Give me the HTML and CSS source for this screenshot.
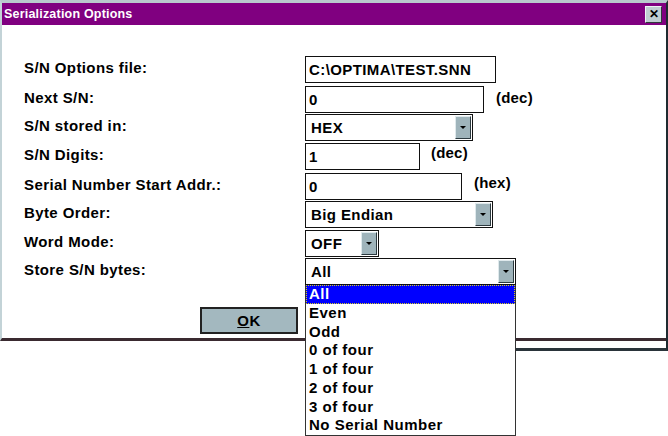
FILE: index.html
```html
<!DOCTYPE html>
<html lang="en">
<head>
  <meta charset="UTF-8" />
  <title>Serialization Options</title>
  <link rel="stylesheet" href="styles.css">
</head>
<body>
  <div class="window">
    <div class="titlebar">
      <span class="title">Serialization Options</span>
      <span class="close">&#x2715;</span>
    </div>

    <div class="dialog">
      <div class="row r1">
        <span class="label">S/N Options file:</span>
        <span class="field text w190">C:\OPTIMA\TEST.SNN</span>
      </div>
      <div class="row r2">
        <span class="label">Next S/N:</span>
        <span class="field text w178">0</span>
        <span class="unit u-next">(dec)</span>
      </div>
      <div class="row r3">
        <span class="label">S/N stored in:</span>
        <span class="field select w167">HEX<i class="arrow"></i></span>
      </div>
      <div class="row r4">
        <span class="label">S/N Digits:</span>
        <span class="field text w114">1</span>
        <span class="unit u-digits">(dec)</span>
      </div>
      <div class="row r5">
        <span class="label">Serial Number Start Addr.:</span>
        <span class="field text w156">0</span>
        <span class="unit u-addr">(hex)</span>
      </div>
      <div class="row r6">
        <span class="label">Byte Order:</span>
        <span class="field select w187">Big Endian<i class="arrow"></i></span>
      </div>
      <div class="row r7">
        <span class="label">Word Mode:</span>
        <span class="field select w73">OFF<i class="arrow"></i></span>
      </div>
      <div class="row r8">
        <span class="label">Store S/N bytes:</span>
        <span class="field select w210 open">All<i class="arrow"></i>
          <ul class="listbox">
            <li class="selected"><span>All</span></li>
            <li>Even</li>
            <li>Odd</li>
            <li>0 of four</li>
            <li>1 of four</li>
            <li>2 of four</li>
            <li>3 of four</li>
            <li>No Serial Number</li>
          </ul>
        </span>
      </div>

      <div class="buttons">
        <button class="btn"><u>O</u>K</button>
      </div>
    </div>
    <div class="edge-right"></div>
  </div>
</body>
</html>
```

FILE: styles.css
```css
body {
  margin: 0;
  width: 668px;
  height: 436px;
  background: #fff;
  font-family: "Liberation Sans", Arial, sans-serif;
  font-weight: bold;
  font-size: 15px;
  color: #000;
  overflow: hidden;
}

/* window frame */
.window {
  position: relative;
  width: 664px;
  height: 335px;
  border-top: 3px solid #b9c9cd;
  border-left: 2px solid #c3d3d7;
  border-right: 2px solid #1e2a30;
  border-bottom: 3px solid #3a2a30;
  background: #fff;
}

.titlebar {
  display: flex;
  align-items: center;
  justify-content: space-between;
  height: 22px;
  background: #800080;
  padding: 0 4px 0 2px;
}
.title {
  color: #fff;
  font-size: 12.5px;
  letter-spacing: 0.2px;
}
.close {
  box-sizing: border-box;
  width: 17px;
  height: 17px;
  display: flex;
  align-items: center;
  justify-content: center;
  background: #c0cdd2;
  border: 1px solid;
  border-color: #eef3f5 #30383c #30383c #eef3f5;
  font-size: 12px;
  color: #000;
}

/* form */
.dialog {
  padding: 29px 0 0 22px;
}
.row {
  display: flex;
  align-items: center;
}
.r1 { height: 30px; }
.r2 { height: 30px; }
.r3 { height: 27px; }
.r4 { height: 31px; }
.r5 { height: 29px; }
.r6 { height: 27px; }
.r7 { height: 30px; }
.r8 { height: 27px; }

.label {
  width: 281px;
  flex: none;
  letter-spacing: 0.4px;
  margin-top: -4px;
}

.field {
  position: relative;
  box-sizing: border-box;
  height: 27px;
  border: 1px solid #111;
  background: #fff;
  display: flex;
  align-items: center;
  padding-left: 3px;
  letter-spacing: 0.4px;
}
.w190 { width: 191px; }
.w178 { width: 179px; }
.w167 { width: 168px; }
.w114 { width: 115px; }
.w156 { width: 157px; }
.w187 { width: 188px; }
.w73  { width: 74px; }
.w210 { width: 211px; }

.unit {
  letter-spacing: 0.2px;
  margin-top: -3px;
}
.u-next { margin-left: 12px; }
.u-digits { margin-left: 11px; margin-top: -8px; }
.u-addr { margin-left: 12px; margin-top: -8px; }

.select { padding-left: 5px; }
.arrow {
  position: absolute;
  right: 1px;
  top: 1px;
  width: 14px;
  height: 21px;
  background: #9fb4bb;
  border: 1px solid;
  border-color: #dfe9ec #2c3a40 #2c3a40 #dfe9ec;
}
.arrow::after {
  content: "";
  position: absolute;
  left: 4px;
  top: 9px;
  border-left: 3px solid transparent;
  border-right: 3px solid transparent;
  border-top: 3px solid #000;
}

/* open drop-down list */
.listbox {
  position: absolute;
  left: -1px;
  top: 26px;
  width: 211px;
  box-sizing: border-box;
  margin: 0;
  padding: 0;
  list-style: none;
  background: #fff;
  border: 1px solid #333;
  border-top: none;
  z-index: 2;
}
.listbox li {
  height: 18.75px;
  line-height: 18.75px;
  padding-left: 3px;
  letter-spacing: 0.5px;
}
.listbox li.selected {
  background: #0000ff;
  color: #fff;
  outline: 1px dotted #d8d020;
  outline-offset: -1px;
}

.buttons {
  padding: 22px 0 0 176px;
}
.btn {
  width: 98px;
  height: 27px;
  background: #a3b8bf;
  border: 2px solid #222;
  font: inherit;
  letter-spacing: 0.5px;
  color: #000;
}

/* lower right frame piece of the window behind */
.edge-right {
  position: absolute;
  right: -2px;
  bottom: -13px;
  width: 153px;
  height: 10px;
  border-right: 2px solid #1e2a30;
  border-bottom: 3px solid #2a343a;
}
```
